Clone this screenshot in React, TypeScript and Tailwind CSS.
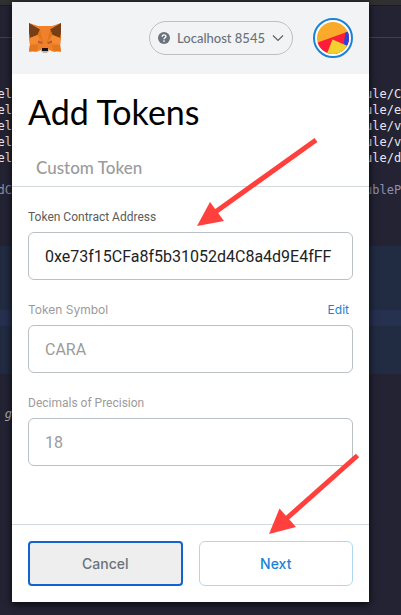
import type { ReactNode } from "react";

type CodeRow = { left: string; right: string; tone: string };

const codeRows: CodeRow[] = [
  { left: "el", right: "ule/C", tone: "text-[#e8e8f0]" },
  { left: "el", right: "ule/em", tone: "text-[#e8e8f0]" },
  { left: "el", right: "ule/ve", tone: "text-[#e8e8f0]" },
  { left: "el", right: "ule/ve", tone: "text-[#e8e8f0]" },
  { left: "el", right: "ule/di", tone: "text-[#e8e8f0]" },
  { left: "", right: "", tone: "text-[#8f8fae]" },
  { left: "dC", right: "ublePe", tone: "text-[#8f8fae]" },
];

function Editor() {
  return (
    <div
      aria-hidden="true"
      className="col-start-1 row-start-1 flex min-w-0 flex-col overflow-hidden bg-[#232334] font-['DejaVu_Sans_Mono',monospace] text-xs leading-4"
    >
      <div className="h-[5px] bg-[#303030]" />
      <div className="h-8 border-t border-[#1b1b28]" />
      <div className="h-[49px] border-t border-[#414154]" />
      {codeRows.map((row, i) => (
        <div key={i} className={`flex h-4 justify-between whitespace-pre ${row.tone}`}>
          <span className="flex w-3 justify-end">{row.left}</span>
          <span className="w-9">{row.right}</span>
        </div>
      ))}
      <div className="mt-12 h-16 bg-[#212b42]" />
      <div className="h-4 bg-[#26304f]" />
      <div className="h-12 bg-[#212b42]" />
      <div className="mt-8 flex h-4 w-3 justify-end text-[#b5b5b5] italic">g</div>
    </div>
  );
}

function Fox() {
  return (
    <svg viewBox="0 0 34 32" className="h-8 w-[34px]" role="img" aria-label="MetaMask">
      <path d="M1 1 10 4h14l9-3v16l-1 5 1 7-7 1-5-2-1 2h-6l-1-2-5 2-7-1 1-7-1-5z" fill="#f0812a" />
      <path d="M1 1 12 7.500 9.500 13 2 16 1 10z" fill="#763d16" />
      <path d="M33 1 22 7.500 24.500 13 32 16 33 10z" fill="#763d16" />
      <path d="m12 7.500 3 12.500-5.500-7zM22 7.500 19 20l5.500-7z" fill="#e2761b" />
      <path d="M2 16 9.500 13l2 8-10 1zM32 16 24.500 13l-2 8 10 1z" fill="#f58a30" />
      <path d="M2 23h8l-1 5-8 2zM32 23h-8l1 5 8 2z" fill="#e4761b" />
      <path d="m10 18.500 5 1.500-1 2-4-1zM24 18.500l-5 1.500 1 2 4-1z" fill="#b4602f" />
      <path d="M13 28.500 14 26h6l1 2.500-2 2.500h-4z" fill="#c8b5a6" />
      <path d="M14 26h6v3h-6z" fill="#161616" />
    </svg>
  );
}

function Avatar() {
  return (
    <button
      type="button"
      aria-label="Account"
      className="flex size-10 items-center justify-center rounded-full border-2 border-[#1a82d7] bg-white"
    >
      <svg viewBox="0 0 32 32" className="size-8" aria-hidden="true">
        <defs>
          <clipPath id="account-disc">
            <circle cx="16" cy="16" r="16" />
          </clipPath>
        </defs>
        <g clipPath="url(#account-disc)">
          <path d="M0 0h32v32H0z" fill="#faaa2a" />
          <path d="M-1 21 33 9v24H-1z" fill="#fc1e38" />
          <path d="M28.500 10.500 33 9v17l-6.500-3z" fill="#2a43df" />
          <path d="M15.500 17.500 33 25v8H9.500z" fill="#f2d030" />
        </g>
      </svg>
    </button>
  );
}

function NetworkPicker() {
  return (
    <button
      type="button"
      className="flex h-[34px] w-36 items-center rounded-full border border-[#bbc0c5] px-2 text-[#6a737d]"
    >
      <svg viewBox="0 0 12 12" className="size-3 shrink-0" aria-hidden="true">
        <circle cx="6" cy="6" r="6" fill="#6a737d" />
        <path d="M4.200 4.700c0-2.400 3.700-2.300 3.700-.2C7.900 5.800 6 5.700 6 7.200" fill="none" stroke="#fff" strokeWidth="1.400" />
        <circle cx="6" cy="9.100" r=".85" fill="#fff" />
      </svg>
      <span className="flex-1 text-center font-['Lato',sans-serif] text-[13px] leading-5 font-medium">
        Localhost 8545
      </span>
      <svg viewBox="0 0 12 8" className="h-2 w-3 shrink-0" aria-hidden="true">
        <path d="m1 1.500 5 5 5-5" fill="none" stroke="#5b636b" strokeWidth="1.200" />
      </svg>
    </button>
  );
}

type FieldProps = {
  id: string;
  label: string;
  value: string;
  labelStyle: string;
  disabled?: boolean;
  action?: ReactNode;
};

function Field({ id, label, value, labelStyle, disabled, action }: FieldProps) {
  return (
    <div className="flex flex-col gap-[7px]">
      <div className="flex h-4 items-center justify-between text-xs leading-4">
        <label htmlFor={id} className={labelStyle}>
          {label}
        </label>
        {action}
      </div>
      <input
        id={id}
        type="text"
        defaultValue={value}
        disabled={disabled}
        className="h-12 w-full rounded-md border border-[#bbc0c5] bg-white px-4 font-['Roboto',sans-serif] text-base text-[#222] disabled:text-[#9b9b9b]"
      />
    </div>
  );
}

function Popup() {
  return (
    <main className="col-start-1 row-start-1 mt-0.5 mr-8 mb-[13px] ml-3 flex min-w-0 flex-col bg-white font-['Inter',sans-serif] shadow-[0_2px_8px_rgba(0,0,0,0.8)]">
      <header className="flex h-[72px] items-center bg-[#f2f3f4] px-4">
        <Fox />
        <div className="ml-auto flex items-center gap-5">
          <NetworkPicker />
          <Avatar />
        </div>
      </header>
      <h1 className="px-4 pt-4 font-['Lato',sans-serif] text-[34px] leading-[44px] text-black">Add Tokens</h1>
      <div role="tablist" className="mt-4 flex border-b border-[#d2d8dd] px-4">
        <button
          type="button"
          role="tab"
          aria-selected="true"
          className="p-2 font-['Lato',sans-serif] text-[17px] leading-5 font-medium text-[#9b9b9b]"
        >
          Custom Token
        </button>
      </div>
      <form className="flex flex-1 flex-col">
        <div className="flex flex-1 flex-col gap-[22px] px-4 pt-[22px] pb-8">
          <Field
            id="address"
            label="Token Contract Address"
            value="0xe73f15CFa8f5b31052d4C8a4d9E4fFF"
            labelStyle="font-['Roboto',sans-serif] text-[#5b5b5b]"
          />
          <Field
            id="symbol"
            label="Token Symbol"
            value="CARA"
            disabled
            labelStyle="text-[#9b9b9b]"
            action={
              <button type="button" className="px-1 text-xs leading-4 text-[#1a82d7]">
                Edit
              </button>
            }
          />
          <Field
            id="decimals"
            label="Decimals of Precision"
            value="18"
            disabled
            labelStyle="font-['Roboto',sans-serif] text-[#9b9b9b]"
          />
        </div>
        <footer className="grid grid-cols-2 gap-4 border-t border-[#d2d8dd] p-4 text-sm leading-5 font-medium">
          <button
            type="button"
            className="h-[45px] rounded-sm border-2 border-[#1263cf] bg-[#eeeeee] text-[#6a737d]"
          >
            Cancel
          </button>
          <button
            type="button"
            className="h-[45px] rounded-md border border-[#b0d7f2] bg-white text-[#1a82d7]"
          >
            Next
          </button>
        </footer>
      </form>
    </main>
  );
}

function Arrows() {
  return (
    <svg
      width="401"
      height="615"
      viewBox="0 0 401 615"
      className="pointer-events-none absolute top-0 left-0"
      aria-hidden="true"
    >
      <g fill="#ff403c" stroke="#ff403c">
        <path d="M316 140 214 213" strokeWidth="5" />
        <path d="M197 226 210 202 224 221z" stroke="none" />
        <path d="M357.500 455.500 286 519" strokeWidth="5" />
        <path d="M269 534 279.500 508.500 296 527z" stroke="none" />
      </g>
    </svg>
  );
}

export default function App() {
  return (
    <div className="relative grid min-h-screen grid-cols-1 overflow-hidden">
      <Editor />
      <Popup />
      <Arrows />
    </div>
  );
}
